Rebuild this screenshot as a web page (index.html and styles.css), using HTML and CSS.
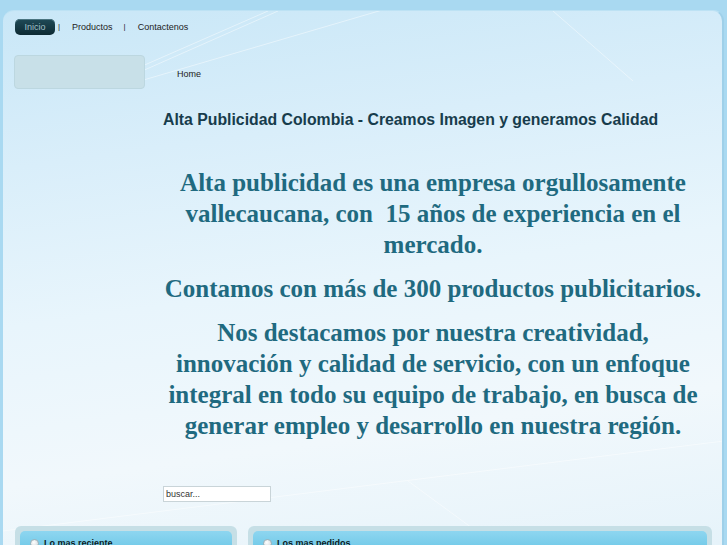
FILE: index.html
```html
<!DOCTYPE html>
<html lang="es">
<head>
<meta charset="utf-8">
<title>Alta Publicidad Colombia</title>
<link rel="stylesheet" href="styles.css">
</head>
<body>
<div class="page">
  <div class="deco">
    <svg width="721" height="535" viewBox="0 0 721 535">
      <g stroke="#ffffff" stroke-opacity="0.45" fill="none" stroke-width="1">
        <path d="M105 70 L265 0"/>
        <path d="M112 72 L275 0"/>
        <path d="M120 75 L410 -10"/>
        <path d="M550 0 L630 70"/>
        <path d="M405 470 L480 525"/>
        <path d="M0 520 L721 430"/>
      </g>
    </svg>
  </div>
  <nav class="nav">
    <a class="pill">Inicio</a>
    <span class="sep">|</span>
    <a class="link">Productos</a>
    <span class="sep">|</span>
    <a class="link">Contactenos</a>
  </nav>
  <div class="main">
    <aside class="side">
      <div class="sidebox"></div>
    </aside>
    <section class="content">
      <div class="crumb">Home</div>
      <h1 class="title">Alta Publicidad Colombia - Creamos Imagen y generamos Calidad</h1>
      <div class="text">
        <p>Alta publicidad es una empresa orgullosamente vallecaucana, con&nbsp; 15 años de experiencia en el mercado.</p>
        <p>Contamos con más de 300 productos publicitarios.</p>
        <p>Nos destacamos por nuestra creatividad, innovación y calidad de servicio, con un enfoque integral en todo su equipo de trabajo, en busca de generar empleo y desarrollo en nuestra región.</p>
      </div>
      <div class="search"><input class="field" type="text" value="buscar..."></div>
    </section>
  </div>
  <div class="boxes">
    <div class="box small"><div class="boxhead"><span class="dot"></span>Lo mas reciente</div></div>
    <div class="box large"><div class="boxhead"><span class="dot"></span>Los mas pedidos</div></div>
  </div>
</div>
</body>
</html>
```
FILE: styles.css
```css
html, body {
  margin: 0;
  padding: 0;
  background: #a9d9f1;
  overflow: hidden;
}
body {
  padding: 10px 3px 0 3px;
  height: 545px;
  box-sizing: border-box;
}
.page {
  position: relative;
  width: 721px;
  height: 535px;
  border-radius: 11px 11px 0 0;
  background: linear-gradient(172deg, #c9e7f7 0%, #d9eefa 25%, #e8f5fc 50%, #f1f8fc 75%, #e6f3fa 100%);
  border-top: 1px solid #bde2f4;
  border-right: 2px solid #9fd0e9;
  box-sizing: border-box;
  overflow: hidden;
  font-family: "Liberation Sans", Arial, sans-serif;
}
.deco {
  position: absolute;
  left: 0;
  top: 0;
  pointer-events: none;
}
.nav {
  position: relative;
  display: flex;
  align-items: center;
  padding: 7px 0 0 12px;
  height: 17px;
  font-size: 9px;
  color: #222;
}
.pill {
  display: inline-block;
  width: 40px;
  height: 16px;
  line-height: 16px;
  text-align: center;
  border-radius: 5px;
  background: linear-gradient(#1f4a57, #0d2a33);
  color: #a0c0c9;
  box-shadow: inset 0 1px 0 #4a7480;
}
.sep {
  margin: 0 12px 0 3px;
  font-size: 8px;
}
.sep:nth-of-type(2) {
  margin-left: 11px;
}
.link {
  color: #222;
}
.main {
  position: relative;
  display: flex;
  padding-left: 11px;
}
.side {
  width: 149px;
  flex: none;
  padding-top: 20px;
}
.sidebox {
  width: 129px;
  height: 32px;
  background: #c8e0e8;
  border: 1px solid #bcd7e0;
  border-radius: 4px;
}
.content {
  width: 540px;
}
.crumb {
  margin: 34px 0 0 14px;
  font-size: 9px;
  color: #222;
  height: 14px;
}
.title {
  margin: 28px 0 0 0;
  font-size: 15.8px;
  font-weight: bold;
  color: #173c4c;
  line-height: 18px;
}
.text {
  margin-top: 38px;
  text-align: center;
  font-family: "Liberation Serif", "Times New Roman", serif;
  font-weight: bold;
  font-size: 25px;
  line-height: 31px;
  color: #1f6a80;
}
.text p {
  margin: 0 0 13px 0;
}
.search {
  margin-top: 42px;
}
.field {
  width: 108px;
  height: 16px;
  box-sizing: border-box;
  border: 1px solid #c9d4d8;
  background: #fff;
  padding: 0 2px;
  font-family: "Liberation Sans", Arial, sans-serif;
  font-size: 9px;
  color: #333;
  outline: none;
}
.boxes {
  position: absolute;
  left: 12px;
  top: 515px;
  display: flex;
  gap: 11px;
}
.box {
  height: 30px;
  background: #c6dfe6;
  border-radius: 6px;
  padding: 5px 5px 0 5px;
  box-sizing: border-box;
}
.small { width: 222px; }
.large { width: 464px; }
.boxhead {
  height: 20px;
  border-radius: 5px 5px 0 0;
  background: linear-gradient(#8ed6f0, #6dc7e7);
  font-size: 9px;
  font-weight: bold;
  color: #0c1c24;
  display: flex;
  align-items: center;
  padding: 4px 0 0 10px;
  box-sizing: border-box;
}
.dot {
  width: 7px;
  height: 7px;
  border-radius: 50%;
  background: radial-gradient(circle at 40% 35%, #ffffff, #c9d2d6);
  border: 1px solid #9fb1b8;
  margin-right: 5px;
}
```
